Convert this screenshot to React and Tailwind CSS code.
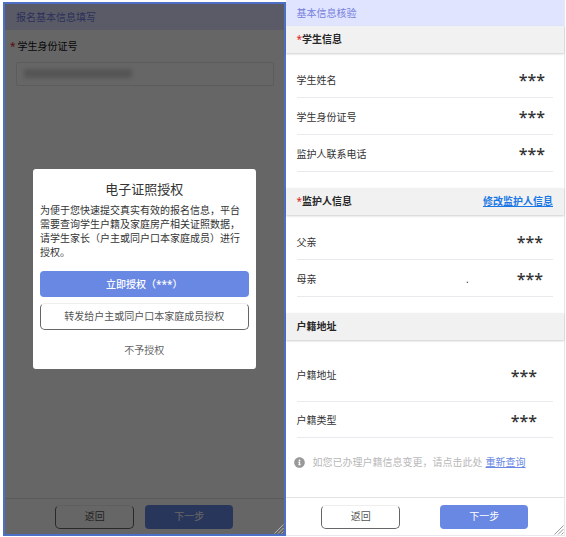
import { FaInfoCircle } from 'react-icons/fa'

const studentRows = ['学生姓名', '学生身份证号', '监护人联系电话']

function ResizeGrip({ className }) {
  return (
    <svg viewBox="0 0 10 10" className={`absolute bottom-0 right-0 size-[10px] ${className}`} fill="none" stroke="currentColor" aria-hidden="true">
      <path d="M0.5 9.5 9.5 0.5M4 9.5 9.5 4M7.5 9.5 9.5 7.5" />
    </svg>
  )
}

function SectionHeader({ title, required, children }) {
  return (
    <div className="flex h-[27px] items-center justify-between bg-[#f1f1f1] pl-[11px] pr-[11px] shadow-[0_1px_2px_rgba(0,0,0,0.2)]">
      <h2 className="text-[10px] font-bold text-[#262626]">
        {required && <span className="font-normal text-[#e02020]">*</span>}
        {title}
      </h2>
      {children}
    </div>
  )
}

function InfoRow({ label, note, className = 'h-[37px]' }) {
  return (
    <div className={`flex items-center border-b border-[#e8eaee] pt-[2px] text-[10px] text-[#333] ${className}`}>
      <dt className="flex-1">{label}</dt>
      {note && <span className="mr-12">{note}</span>}
      <dd className="text-base leading-4 font-medium text-[#333]">***</dd>
    </div>
  )
}

function OutlineButton({ children, className }) {
  return (
    <button type="button" className={`rounded-[5px] border border-[#666] border-t-[#eee] text-[10px] text-[#555] ${className}`}>
      {children}
    </button>
  )
}

function PrimaryButton({ children, className }) {
  return (
    <button type="button" className={`rounded-[4px] bg-[#6888e3] text-[10px] text-white ${className}`}>
      {children}
    </button>
  )
}

function AuthDialog() {
  return (
    <div className="absolute inset-0 flex items-center justify-center bg-black/60">
      <div role="dialog" aria-labelledby="auth-title" className="mx-7 flex w-full flex-col rounded-[3px] bg-white px-[7px] pb-[6px] pt-2">
        <h2 id="auth-title" className="text-center text-[13px] leading-6 text-[#333]">
          电子证照授权
        </h2>
        <p className="mt-[2px] text-[10px] leading-[14px] text-[#333]">
          为便于您快速提交真实有效的报名信息，平台需要查询学生户籍及家庭房产相关证照数据，请学生家长（户主或同户口本家庭成员）进行授权。
        </p>
        <PrimaryButton className="mt-3 h-[26px] font-medium">立即授权（***）</PrimaryButton>
        <OutlineButton className="mt-[6px] h-[27px]">转发给户主或同户口本家庭成员授权</OutlineButton>
        <button type="button" className="mt-[7px] h-[26px] text-[10px] text-[#666]">
          不予授权
        </button>
      </div>
    </div>
  )
}

function ApplyPanel() {
  return (
    <section className="relative mb-[1px] mt-[2px] flex flex-1 flex-col border-2 border-[#4d70c6]">
      <header className="flex h-[26px] items-center bg-[#e0e4ff] pl-[11px] text-[10px] text-[#7079e4]">报名基本信息填写</header>
      <div className="flex-1 pl-[11px] pr-[10px] pt-2">
        <label htmlFor="student-id" className="-ml-[6px] block text-[10px] leading-4 text-[#111]">
          <span className="mr-[2px] text-[#e02020]">*</span>
          学生身份证号
        </label>
        <div className="relative mt-2">
          <input id="student-id" readOnly className="block h-6 w-full rounded-[2px] border border-[#e6e6e6] px-2 text-[10px]" />
          <span className="absolute left-2 top-[7px] h-[9px] w-[108px] bg-[#d4d4d4] blur-[2px]" />
        </div>
      </div>
      <footer className="flex h-[36px] items-center justify-center gap-[11px] border-t border-[#e2e2e2]">
        <OutlineButton className="h-6 w-[79px]">返回</OutlineButton>
        <PrimaryButton className="h-6 w-[88px]">下一步</PrimaryButton>
      </footer>
      <AuthDialog />
      <ResizeGrip className="text-[#b5b5b5]" />
    </section>
  )
}

function VerifyPanel() {
  return (
    <section className="relative mb-[1px] flex flex-1 flex-col border-b border-r border-[#e8e8ee]">
      <header className="flex h-[26px] items-center bg-[#e0e4ff] pl-[11px] text-[10px] text-[#7480dc]">基本信息核验</header>
      <SectionHeader title="学生信息" required />
      <dl className="mb-4 ml-[11px] mr-[11px] pt-2 [&_dd]:mr-2">
        {studentRows.map((label) => (
          <InfoRow key={label} label={label} />
        ))}
      </dl>
      <SectionHeader title="监护人信息" required>
        <a href="#guardian" className="text-[10px] font-bold text-[#1a78e6] underline">
          修改监护人信息
        </a>
      </SectionHeader>
      <dl className="mb-4 ml-[11px] mr-[11px] pt-2 [&_dd]:mr-[10px]">
        <InfoRow label="父亲" />
        <InfoRow label="母亲" note="." />
      </dl>
      <SectionHeader title="户籍地址" />
      <dl className="ml-[11px] mr-[11px] pt-2 [&_dd]:mr-4">
        <InfoRow label="户籍地址" className="h-[54px]" />
        <InfoRow label="户籍类型" className="h-[36px]" />
      </dl>
      <p className="mt-4 flex items-center pl-2 text-[10px] leading-4 text-[#b8b8b8]">
        <FaInfoCircle className="mr-2 size-[11px] text-[#999]" />
        如您已办理户籍信息变更，请点击此处
        <a href="#refresh" className="ml-[3px] text-[#6888e3] underline">
          重新查询
        </a>
      </p>
      <footer className="mt-auto flex h-[38px] items-center justify-center gap-10 border-t border-[#e2e2e2]">
        <OutlineButton className="h-6 w-[79px]">返回</OutlineButton>
        <PrimaryButton className="h-6 w-[88px]">下一步</PrimaryButton>
      </footer>
      <ResizeGrip className="text-[#999]" />
    </section>
  )
}

export default function App() {
  return (
    <main className="flex min-h-screen bg-white pl-[3px] pr-[1px] font-['Noto_Sans','Noto_Sans_CJK_SC',sans-serif]">
      <ApplyPanel />
      <VerifyPanel />
    </main>
  )
}
